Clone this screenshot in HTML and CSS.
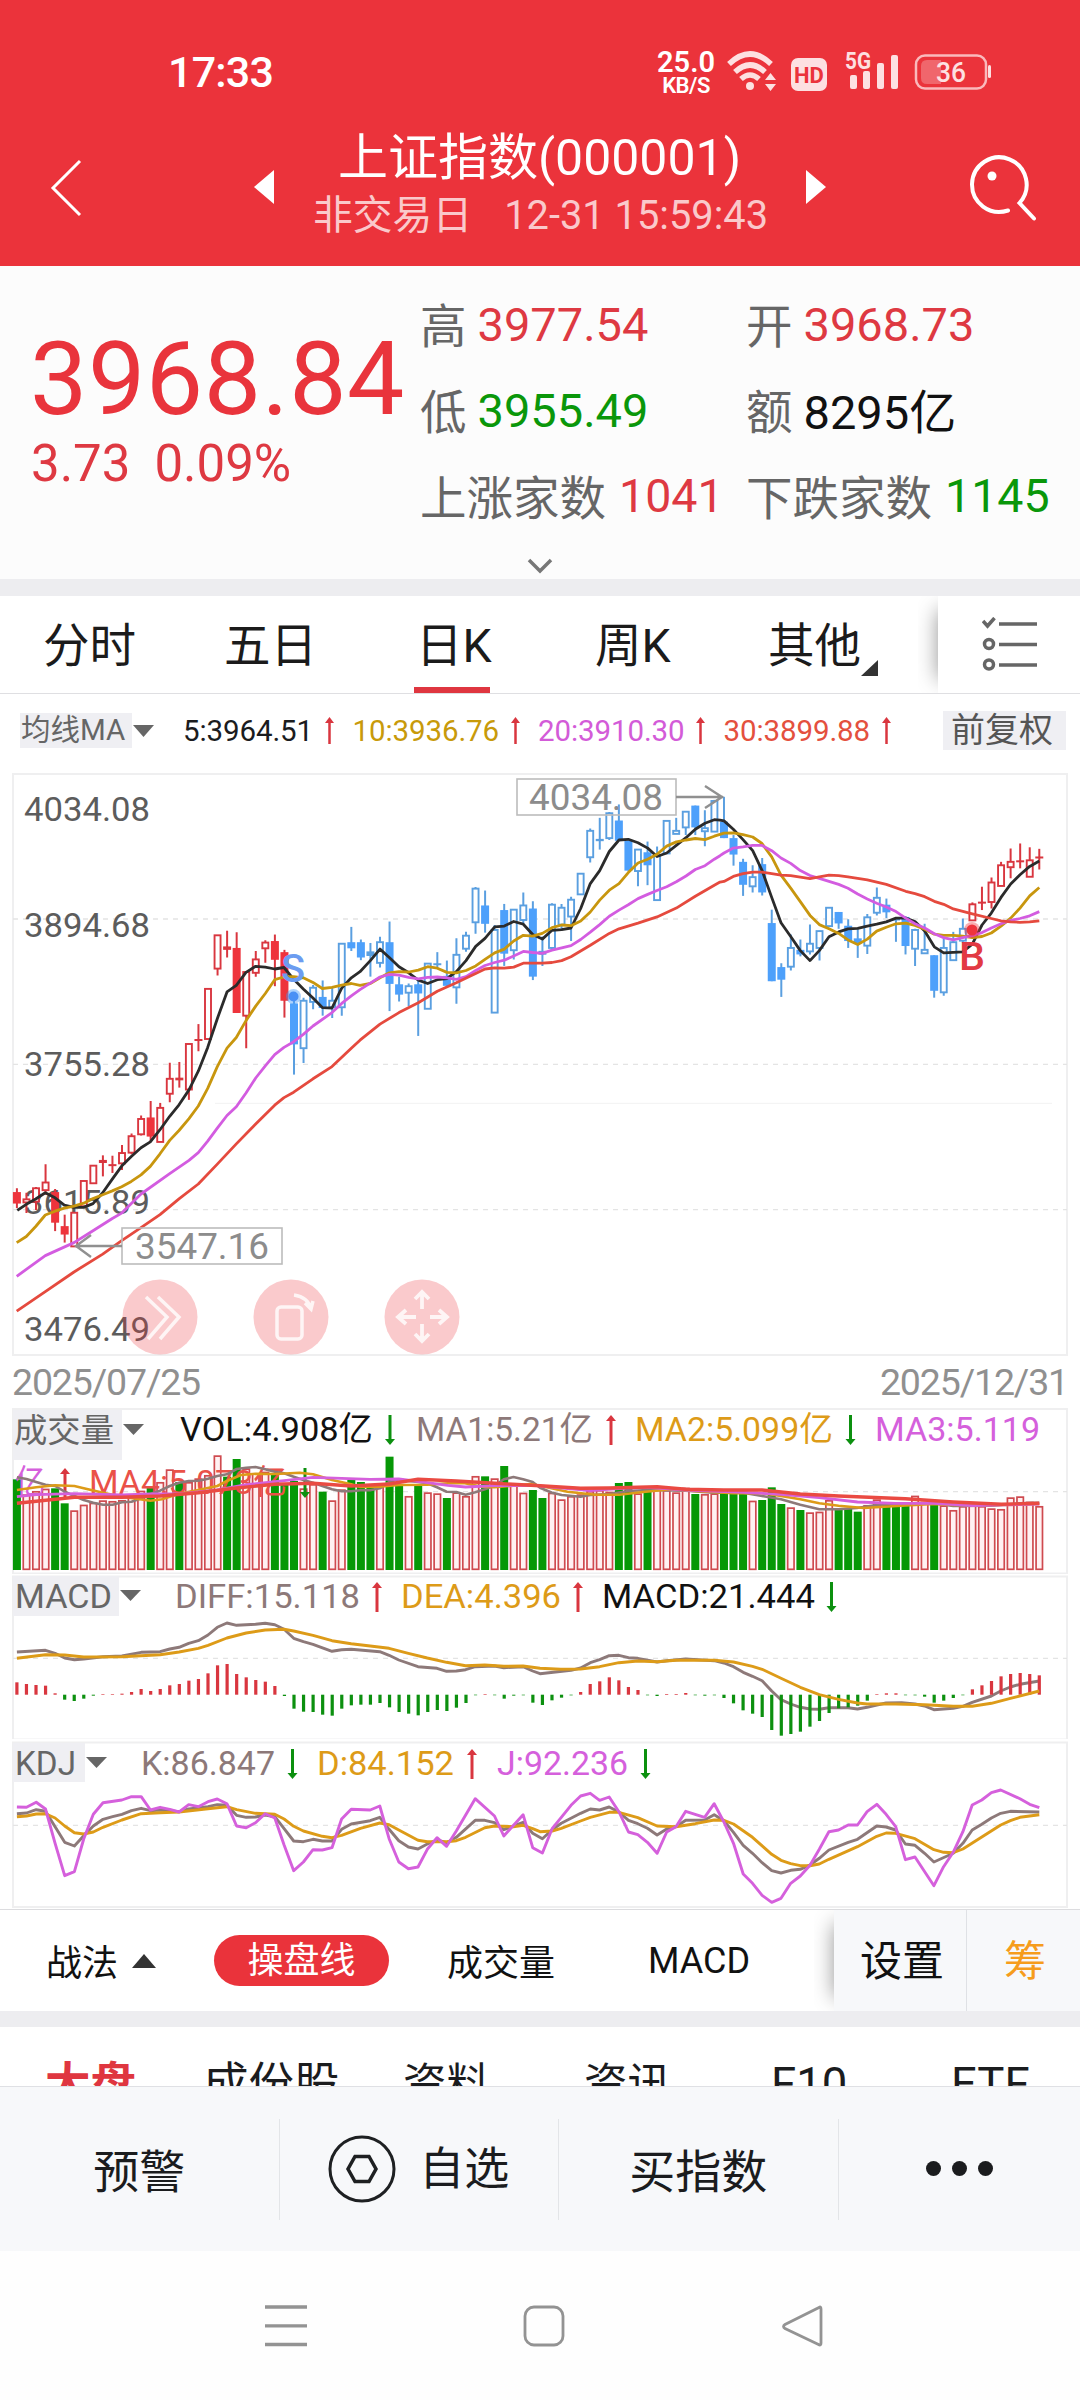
FILE: index.html
```html
<!DOCTYPE html>
<html lang="zh-CN">
<head>
<meta charset="utf-8">
<title>上证指数</title>
<link rel="stylesheet" href="styles.css">
</head>
<body>
<header class="top">
  <div class="status">
    <span class="clock">17:33</span>
    <div class="speed"><b>25.0</b><small>KB/S</small></div>
    <svg class="sysicons" width="270" height="50" viewBox="725 46 270 50">
      <g fill="none" stroke="#fde0e1" stroke-width="5.5">
        <path d="M729 64Q750 44 771 64"/><path d="M735 72Q750 58 765 72"/><path d="M741 79Q750 71 759 79"/>
      </g>
      <g fill="#fde0e1">
        <circle cx="750" cy="86" r="4"/>
        <path d="M765 80l5.5-7 5.5 7zM765 84l5.500 7 5.500-7z"/>
        <rect x="791" y="58" width="36" height="33" rx="7"/>
        <rect x="850" y="75" width="7" height="14" rx="2"/><rect x="863" y="71" width="7" height="18" rx="2"/><rect x="877" y="63" width="7" height="26" rx="2"/><rect x="891" y="55" width="7" height="34" rx="2"/>
        <rect x="988" y="65" width="3" height="13" rx="1.500"/>
      </g>
      <text x="809" y="82.500" class="hd">HD</text>
      <text x="845" y="69" class="g5" textLength="26" lengthAdjust="spacingAndGlyphs">5G</text>
      <rect x="916" y="55.500" width="70" height="33" rx="9" fill="none" stroke="#fab9bc" stroke-width="2.500"/>
      <path d="M941 60h-14q-6 0-6 6v12q0 6 6 6h14z" fill="#f0666c"/>
      <text x="936" y="82" class="bat" textLength="30" lengthAdjust="spacingAndGlyphs">36</text>
    </svg>
  </div>
  <div class="titlebar">
    <svg class="back" width="32" height="58" viewBox="0 0 32 58"><path d="M30 2L3 29L30 56" fill="none" stroke="#fff" stroke-width="3"/></svg>
    <svg class="prev" width="20" height="34" viewBox="0 0 20 34"><path d="M20 0v34L0 17z" fill="#fff"/></svg>
    <div class="titles">
      <h1>上证指数<span>(000001)</span></h1>
      <p>非交易日<span>12-31 15:59:43</span></p>
    </div>
    <svg class="next" width="20" height="34" viewBox="0 0 20 34"><path d="M0 0v34L20 17z" fill="#fff"/></svg>
    <svg class="search" width="70" height="70" viewBox="968 154 70 70"><g fill="none" stroke="#fff" stroke-width="4" stroke-linecap="round"><path d="M1008 210.500A27.300 27.300 0 1 1 1019.500 203L1034 218.500"/></g><circle cx="992" cy="176" r="4.500" fill="#fff"/></svg>
  </div>
</header>

<section class="quote">
  <div class="price">
    <div class="last">3968.84</div>
    <div class="chg"><span>3.73</span><span>0.09%</span></div>
  </div>
  <div class="stats">
    <div><label>高</label><span class="up">3977.54</span></div><div><label>开</label><span class="up">3968.73</span></div>
    <div><label>低</label><span class="dn">3955.49</span></div><div><label>额</label><span class="blk">8295亿</span></div>
    <div><label>上涨家数</label><span class="up wide">1041</span></div><div><label>下跌家数</label><span class="dn wide">1145</span></div>
  </div>
  <svg class="more" width="26" height="16" viewBox="0 0 26 16"><path d="M2 2L13 13L24 2" fill="none" stroke="#777" stroke-width="3.500"/></svg>
</section>

<nav class="periods">
  <span class="t1">分时</span><span class="t2">五日</span><span class="t3 on">日K</span><span class="t4">周K</span><span class="t5">其他</span>
  <svg class="corner" width="17" height="16" viewBox="0 0 17 16"><path d="M17 0v16H0z" fill="#333"/></svg>
  <div class="listbtn">
    <svg width="56" height="56" viewBox="983 617 56 56"><g fill="none" stroke="#666" stroke-width="3.500"><path d="M1000 624h38M1000 644.500h38M1000 665h38"/><path d="M984 621l4.500 5 7-8"/><circle cx="990" cy="644" r="4.500"/><circle cx="990" cy="664.500" r="4.500"/></g></svg>
  </div>
</nav>

<div class="legend">
  <span class="tag">均线MA</span><svg class="tri" width="21" height="12" viewBox="0 0 21 12"><path d="M0 0h21L10.500 12z" fill="#666"/></svg>
  <span class="m m5">5:3964.51</span><svg class="ar" width="9" height="27" viewBox="0 0 9 27"><path d="M4.500 4v23" stroke="#d9363f" stroke-width="2.500"/><path d="M0 6L4.500 0L9 6z" fill="#d9363f"/></svg>
  <span class="m m10">10:3936.76</span><svg class="ar" width="9" height="27" viewBox="0 0 9 27"><path d="M4.500 4v23" stroke="#d9363f" stroke-width="2.500"/><path d="M0 6L4.500 0L9 6z" fill="#d9363f"/></svg>
  <span class="m m20">20:3910.30</span><svg class="ar" width="9" height="27" viewBox="0 0 9 27"><path d="M4.500 4v23" stroke="#d9363f" stroke-width="2.500"/><path d="M0 6L4.500 0L9 6z" fill="#d9363f"/></svg>
  <span class="m m30">30:3899.88</span><svg class="ar" width="9" height="27" viewBox="0 0 9 27"><path d="M4.500 4v23" stroke="#d9363f" stroke-width="2.500"/><path d="M0 6L4.500 0L9 6z" fill="#d9363f"/></svg>
  <span class="adj">前复权</span>
</div>

<svg class="chart" id="kline" width="1080" height="590" viewBox="0 770 1080 590"></svg>
<div class="dates"><span>2025/07/25</span><span>2025/12/31</span></div>
<svg class="chart" id="vol" width="1080" height="168" viewBox="0 1406 1080 168"></svg>
<svg class="chart" id="macd" width="1080" height="165" viewBox="0 1574 1080 165"></svg>
<svg class="chart" id="kdj" width="1080" height="169" viewBox="0 1739 1080 169"></svg>

<nav class="strategy">
  <span class="s1">战法</span><svg class="uptri" width="24" height="14" viewBox="0 0 24 14"><path d="M0 14h24L12 0z" fill="#333"/></svg>
  <span class="pill">操盘线</span><span class="s3">成交量</span><span class="s4">MACD</span>
  <div class="tools"><span class="set">设置</span><span class="chip">筹</span></div>
</nav>

<nav class="sections">
  <span class="n1">大盘</span><span class="n2">成份股</span><span class="n3">资料</span><span class="n4">资讯</span><span class="n5">F10</span><span class="n6">ETF</span>
</nav>

<footer class="actions">
  <div><span>预警</span></div>
  <div class="fav"><svg width="68" height="68" viewBox="0 0 68 68"><g fill="none" stroke="#1e2022" stroke-width="3"><circle cx="34" cy="34" r="32"/><path d="M27 21.500h14L48 34L41 46.500H27L20 34z" stroke-width="3.500"/></g></svg><span>自选</span></div>
  <div><span>买指数</span></div>
  <div class="dots"><i></i><i></i><i></i></div>
</footer>

<div class="sysnav">
  <svg width="42" height="42" viewBox="0 0 42 42"><path d="M0 2h42M0 20.800h42M0 39.500h42" stroke="#939393" stroke-width="3.300"/></svg>
  <svg width="42" height="42" viewBox="0 0 42 42"><rect x="2" y="2" width="38" height="38" rx="9" fill="none" stroke="#939393" stroke-width="2.800"/></svg>
  <svg width="42" height="42" viewBox="0 0 42 42"><path d="M38 2.500Q40 1 40 4V38Q40 41 37.500 39.500L4 23.500Q1 21.500 4 19.500Z" fill="none" stroke="#939393" stroke-width="2.800"/></svg>
</div>
<script src="chart.js"></script>
</body>
</html>
```
FILE: styles.css
```css
* { box-sizing: border-box; }
body { margin: 0; width: 1080px; height: 2400px; overflow: hidden; background: #fff; color: #1b1c1e; font-family: Roboto, "Noto Sans CJK SC", sans-serif; }
svg { display: block; flex: none; }
span, label { white-space: nowrap; }
.top { height: 266px; background: #eb333b; color: #fff; }
.status { display: flex; height: 116px; padding-left: 168px; }
.clock { width: 486px; margin-top: 46px; font-size: 43px; line-height: 52px; font-weight: 500; letter-spacing: -.8px; }
.speed { width: 64px; display: flex; flex-direction: column; align-items: center; padding-top: 48px; }
.speed b { font-size: 29px; line-height: 28px; font-weight: 600; }
.speed small { font-size: 22px; line-height: 20px; font-weight: 600; letter-spacing: -.5px; }
.sysicons { margin: 46px 0 0 7px; }
.hd { font: 700 22px Roboto; fill: #eb333b; text-anchor: middle; }
.g5 { font: 700 23px Roboto; fill: #fde0e1; }
.bat { font: 500 28px Roboto; fill: #fde0e1; }
.titlebar { display: flex; height: 150px; padding-left: 50px; }
.back { margin-top: 43px; }
.prev { margin: 54px 0 0 172px; }
.titles { width: 532px; display: flex; flex-direction: column; align-items: center; }
.titles h1 { margin: 12px 0 0; font-size: 50px; line-height: 60px; font-weight: 400; white-space: nowrap; padding-right: 1px; }
.titles p { display: flex; align-items: baseline; gap: 32px; margin: 1px 0 0; font-size: 39.800px; line-height: 54px; color: #fac9cb; padding-left: 1px; }
.next { margin-top: 54px; }
.search { margin: 38px 0 0 142px; }

.quote { display: grid; grid-template-columns: 420px 660px; grid-template-rows: 284px 29px; height: 313px; background: #fcfcfc; }
.price { padding: 58px 0 0 30px; color: #e9343c; }
.last { font-size: 102px; line-height: 110px; letter-spacing: .6px; }
.chg { display: flex; gap: 24px; font-size: 51px; line-height: 60px; margin-top: 0; color: #de3942; padding-left: 1px; }
.stats { display: grid; grid-template-columns: 326px 334px; grid-template-rows: repeat(3, 86px); padding-top: 15px; }
.stats div { display: flex; align-items: center; font-size: 46.500px; }
.stats label { color: #666; margin-top: -4px; }
.stats span { margin-left: 11px; font-size: 47px; }
.stats .blk { margin-top: -4px; }
.stats .wide { margin-left: 13px; font-size: 46.500px; }
.up { color: #de3942; } .dn { color: #0a970a; } .blk { color: #111; }
.more { grid-column: 1 / 3; margin: 8px 0 0 527px; }

.periods { display: flex; align-items: center; height: 115px; border-top: 17px solid #ededf0; border-bottom: 1px solid #dfdfe2; font-size: 46.500px; color: #1b1b1b; }
.periods span { height: 97px; line-height: 100px; }
.t1 { margin-left: 43px; width: 181px; } .t2 { width: 194px; }
.t3 { width: 76px; } .on { border-bottom: 6px solid #df3640; margin-right: 105px; margin-left: -4px; padding-left: 2px; }
.t4 { width: 173px; } .t5 { width: 93px; }
.corner { margin-top: 47px; }
.listbtn { margin-left: 60px; width: 142px; height: 97px; padding: 21px 0 0 44px; background: #fff; box-shadow: -14px 0 20px -14px rgba(0,0,0,.42); clip-path: inset(0 0 0 -20px); }

.legend { display: flex; align-items: center; height: 76px; padding: 0 14px 3px 20px; font-size: 29.500px; }
.tag { width: 112px; height: 35px; line-height: 35px; padding-left: 1px; background: #efeff3; color: #666; letter-spacing: 0; }
.tri { margin: 0 29px 0 1px; }
.m { letter-spacing: -.1px; }
.m5 { width: 142px; } .m10, .m20, .m30 { width: 158px; }
.ar { margin-right: 18.500px; }
.m10 { color: #c89a0a; } .m20 { color: #d35bd8; } .m30 { color: #e4503e; }
.adj { margin-left: auto; width: 123px; height: 39px; line-height: 38px; padding-left: 8px; background: #efeff3; color: #555; font-size: 34px; }

.dates { display: flex; justify-content: space-between; height: 46px; padding: 0 12px 0 12px; font-size: 37.500px; line-height: 44px; color: #909090; letter-spacing: -1.150px; }
.chart text { font-family: Roboto, "Noto Sans CJK SC", sans-serif; }

.strategy { display: flex; align-items: center; height: 102px; margin-top: 1px; border-top: 1px solid #dcdcdf; font-size: 36px; color: #111; }
.s1 { margin-left: 46px; width: 86px; margin-top: -2px; }
.uptri { margin-right: 58px; }
.pill { width: 175px; height: 51px; line-height: 52px; border-radius: 26px; background: #ea333b; color: #fff; text-align: center; margin-top: -1px; }
.s3 { margin-left: 58px; width: 201px; margin-top: -2px; } .s4 { width: 186px; }
.tools { display: flex; width: 246px; height: 101px; background: #f7f8fa; font-size: 42px; line-height: 104px; box-shadow: -14px 0 20px -14px rgba(0,0,0,.42); clip-path: inset(0 0 0 -20px); }
.set { width: 133px; padding-left: 26px; border-right: 1px solid #dfe1e5; }
.chip { flex: 1; padding-left: 37px; color: #f69c1c; }

.sections { display: flex; height: 75px; border-top: 16px solid #ededf0; overflow: hidden; font-size: 45.500px; line-height: 116px; }
.n1 { margin-left: 45px; width: 158px; color: #df3640; font-weight: 700; } .n2 { width: 200px; } .n3 { width: 181px; font-size: 43.500px; } .n4 { width: 187px; font-size: 43.500px; } .n5 { width: 180px; }

.actions { display: grid; grid-template-columns: repeat(3, 279.500px) 1fr; align-items: center; height: 165px; background: #f7f8fa; border-top: 1px solid #dfe0e4; font-size: 46px; }
.actions > div { display: flex; align-items: center; justify-content: center; height: 101px; border-right: 1px solid #e3e5e8; }
.actions > div:last-child { border: 0; }
.actions span { margin-top: -3px; }
.actions .fav { gap: 23px; font-size: 45px; padding-bottom: 1px; }
.actions .fav span { margin-top: -7px; }
.actions .dots { gap: 11px; padding-bottom: 2px; } .dots i { width: 15px; height: 15px; border-radius: 50%; background: #1b1c1e; }
.sysnav { display: flex; gap: 216px; padding: 54px 0 0 265px; height: 149px; background: #fefefe; }
```
FILE: chart.js
```js
const NS = 'http://www.w3.org/2000/svg';
const STEP = 9.555, X0 = 16.9;
const UP = '#d9363f', DOWN = '#0c900f', GRAY = '#8d7979', ORANGE = '#dd9b18', PINK = '#d560dc', RED = '#ea4a42';

function add(parent, tag, attrs, text) {
  const el = document.createElementNS(NS, tag);
  for (const k in attrs) el.setAttribute(k, attrs[k]);
  if (text) el.textContent = text;
  parent.appendChild(el);
  return el;
}
const label = (p, x, y, size, color, text, len) =>
  add(p, 'text', Object.assign({ x, y, 'font-size': size, fill: color }, len ? { textLength: len, lengthAdjust: 'spacingAndGlyphs' } : {}), text);
const box = (p, x, y, width, height, fill, more) => add(p, 'rect', Object.assign({ x, y, width, height, fill }, more));
const path = (p, d, stroke, w, more) => add(p, 'path', Object.assign({ d, stroke, 'stroke-width': w, fill: 'none' }, more));

// Series are stored as "x,y" pairs on a tile grid; "|" moves to the next tile.
function series(p, str, tile, sx, sy, oy, color, w) {
  const pts = [];
  str.split('|').forEach((part, k) => part.trim().split(/\s+/).forEach(s => {
    const [x, y] = s.split(',').map(Number);
    pts.push((x / sx + k * tile).toFixed(1) + ',' + (y / sy + oy).toFixed(1));
  }));
  add(p, 'polyline', { points: pts.join(' '), fill: 'none', stroke: color, 'stroke-width': w, 'stroke-linejoin': 'round' });
}
function frame(p, y1, y2, grids) {
  box(p, 13, y1, 1054, y2 - y1, 'none', { stroke: '#efeff0', 'stroke-width': 2 });
  grids.forEach(y => path(p, `M13 ${y}H1067`, '#e4e4e4', 1.3, { 'stroke-dasharray': '5 5' }));
}
function arrow(p, x, y, up) {
  const c = up ? UP : DOWN;
  path(p, up ? `M${x} ${y + 4}v26` : `M${x} ${y}v26`, c, 3);
  add(p, 'path', { d: up ? `M${x - 5} ${y + 6}l5-6 5 6z` : `M${x - 5} ${y + 24}l5 6 5-6z`, fill: c });
}
function title(p, text, y1, h, w, x, base, len) {
  box(p, 13, y1, w, h, '#efeff3');
  label(p, x, base, 33, '#666', text, len);
  add(p, 'path', { d: `M${14 + w} ${base - 18}h21l-10.5 11z`, fill: '#666' });
}

/* Candles: type (h hollow, f filled, c cross), high, body top, body bottom, low */
const candles = `f1093,1103,1133,1145 h1105,1122,1130,1158 h1090,1093,1128,1150 h1030,1078,1098,1110 f1095,1103,1183,1205 f1162,1192,1214,1235 h1155,1157,1245,1245 h1073,1074,1140,1140
h1034,1034,1080,1080 c1007,1019,1027,1062 c1008,1030,1034,1053 h980,1001,1028,1045 h950,957,1000,1004 h903,912,952,955 f865,908,958,970 h870,883,972,972 h765,807,846,868 c763,804,811,830
h716,716,835,862 c664,703,708,735 h572,572,703,703 h432,432,519,537 c420,461,470,490 f424,465,635,635 h525,528,642,727 h473,495,530,540 h445,451,466,504 f430,447,496,565 f470,476,603,647
f600,610,717,796 h595,603,727,766 h562,569,606,625 f550,593,622,642 h567,603,620,648 h452,454,620,642 f410,450,466,473 f443,450,490,497 c452,474,486,540 h436,450,504,516 f396,450,559,630
f540,560,587,605 h558,565,582,617 f545,560,584,695 h505,506,624,624 c476,505,509,520 f498,538,564,568 h440,483,568,611 h423,433,467,475 h306,310,398,428 f315,354,402,425 h405,418,634,634
f350,366,480,512 h363,365,471,495 h320,354,392,402 f343,362,540,549 h435,475,480,512 h348,352,465,468 h350,360,404,415 h331,339,383,447 h270,271,325,325 h153,159,228,242 c125,180,186,208
h110,113,178,183 f90,132,185,185 f180,185,263,263 h207,208,264,304 f187,215,249,301 h200,224,340,340 h133,133,218,218 h125,159,167,167 h107,109,150,170 f93,93,150,170 h105,152,160,199 h78,81,161,161
f70,135,178,178 f170,178,221,250 f232,240,300,329 h249,280,304,320 f230,246,320,328 f365,400,552,552 f505,515,548,593 h430,465,514,524 f443,470,482,487 h404,454,474,482 h420,421,465,498
h358,360,408,408 f371,371,401,415 f390,407,447,465 f416,440,454,491 h376,385,459,481 h307,334,373,380 f336,352,372,387 c385,388,392,449 f382,384,460,482 h415,418,467,512 h402,470,479,480
f484,484,577,595 h440,465,581,590 h423,450,497,497 h388,415,446,452 h346,351,393,393 c305,344,348,366 h281,294,345,362 h240,249,303,303 h205,240,254,283 c192,236,240,257 h202,236,279,279 c206,226,230,260`.split(/\s+/);

const k = document.getElementById('kline');
const KY = 2.6133;
frame(k, 774, 1355, [919, 1064.3, 1209.7]);
path(k, 'M215 1103.300H1052', '#f2f2f2', 1);
[[821, '4034.08'], [937, '3894.68'], [1075.500, '3755.28'], [1213.500, '3615.89'], [1340.500, '3476.49']].forEach(([y, t]) => label(k, 24, y, 34, '#5c5c5c', t, 126));
candles.forEach((s, i) => {
  const t = s[0], x = X0 + STEP * i;
  const [hi, top, bot, lo] = s.slice(1).split(',').map(v => 770 + v / KY);
  const red = i < 29 || i > 99;
  const line = red ? UP : '#5a9fe0', fill = red ? '#ee343c' : '#4da0fb';
  if (t === 'h') {
    path(k, `M${x} ${hi}V${top}M${x} ${bot}V${lo}`, line, 2);
    box(k, x - 3, top, 6, Math.max(bot - top, 2), '#fff', { stroke: line, 'stroke-width': 1.9 });
  } else {
    path(k, `M${x} ${hi}V${lo}`, line, 2);
    box(k, x - 4, top, 8, Math.max(bot - top, 2), t === 'c' ? line : fill);
  }
});
const ma30 = '50,1414 136,1363 222,1312 308,1265 365,1230 423,1196 480,1162 538,1120 595,1082 652,1030 709,977 767,925 824,876 852,856 881,842 939,807 996,775 1054,727|0,706 60,664 117,634 175,608 232,578 289,556 347,532 375,520 404,517 433,518 461,515 490,505 547,505 576,503 605,498 633,488 691,458 748,427 777,415 834,400 891,384 949,361 1006,330 1063,301|0,293 12,291 40,278 69,271 98,267 126,267 155,271 183,275 212,276 241,280 270,284 298,279 327,275 356,276 384,279 413,283 442,287 499,299 557,317 585,323 614,331 643,343 671,351 700,363 757,376 814,388 843,394 872,397 900,398 929,397 958,394';
const ma20 = '50,1323 136,1269 222,1235 279,1204 337,1172 365,1158 423,1108 509,1055 567,1020 595,1000 623,970 652,936 681,903 709,880 738,844 767,805 796,773 824,744 852,725 881,710 910,691 939,669 996,634 1025,610 1054,590|0,574 31,557 60,541 88,534 117,536 146,542 175,546 203,542 232,541 261,543 289,547 318,540 347,524 375,511 404,503 433,497 461,486 490,474 518,477 547,479 576,471 605,465 633,459 662,443 691,424 719,404 748,382 777,366 805,352 834,336 863,325 891,315 920,305 949,292 978,277 1006,260 1035,250 1063,233|0,224 12,217 40,204 69,201 98,197 126,197 155,211 183,230 212,244 241,263 270,276 298,283 327,291 356,299 384,309 413,324 442,337 470,348 499,358 528,370 557,387 585,402 614,413 643,428 671,438 700,444 728,438 757,433 786,425 814,413 843,402 872,393 900,388 929,381 958,370';
const ma10 = '50,1235 79,1219 107,1193 136,1163 165,1153 193,1145 222,1140 251,1132 279,1120 308,1110 337,1100 365,1089 394,1075 423,1058 451,1036 480,1003 509,968 537,942 567,911 595,878 623,832 652,775 681,727 709,699 738,655 767,617 796,584 824,548 852,541 881,540 910,543 939,555 967,571 996,568 1025,562 1054,558|0,563 31,558 60,543 88,530 117,527 146,528 175,523 203,514 232,518 261,529 289,530 318,524 347,512 375,495 404,478 433,468 461,447 490,432 518,434 547,427 576,412 605,405 633,407 662,395 691,371 719,340 748,314 777,297 805,268 834,243 863,233 891,220 920,199 949,188 978,183 1006,179 1035,182 1063,173|0,168 12,165 40,164 69,169 98,175 126,192 155,227 183,275 212,309 241,344 270,380 298,404 327,415 356,427 384,444 413,456 442,442 470,421 499,411 528,402 557,400 585,406 614,416 643,429 671,432 700,432 728,434 757,438 786,435 814,426 843,408 872,387 900,361 929,329 958,307';
const ma5 = '52,1151 79,1135 107,1121 136,1105 165,1118 193,1137 222,1143 251,1143 279,1133 308,1105 337,1069 365,1035 394,1010 423,987 451,972 480,940 509,905 537,875 567,836 595,787 623,725 652,650 681,580 709,563 738,529 767,513 796,515 824,520 852,516 881,547 910,572 939,596 967,621 996,622 1025,570 1054,543|0,527 31,498 60,468 88,490 117,514 146,530 175,549 203,558 232,548 261,545 289,527 318,498 347,461 375,440 404,410 433,408 461,396 490,403 518,430 547,442 576,419 605,417 633,413 662,362 691,297 719,263 748,213 777,183 805,181 834,190 863,204 891,226 920,217 949,197 978,177 1006,155 1035,139 1063,130|0,131 12,133 40,155 69,182 98,211 126,262 155,333 183,399 212,435 241,472 270,498 298,472 327,436 356,423 384,415 413,414 442,408 470,403 499,397 528,387 557,387 585,396 614,421 643,462 671,478 728,475 757,455 786,405 814,374 843,333 872,298 900,274 929,252 958,238';
series(k, ma5, 360, 3, KY, 770, '#2b2b2b', 2.8);
series(k, ma10, 360, 3, KY, 770, '#c8960e', 2.8);
series(k, ma20, 360, 3, KY, 770, '#d35ce0', 2.8);
series(k, ma30, 360, 3, KY, 770, '#e54a3e', 2.8);
label(k, 281, 982, 38, '#6c9cf0', 'S', 24).setAttribute('font-weight', 500);
box(k, 286, 989, 15, 15, '#4a9cf8', { rx: 8, opacity: .45 });
add(k, 'circle', { cx: 293.5, cy: 996.500, r: 5, fill: '#4a90f5' });
add(k, 'circle', { cx: 972, cy: 930, r: 8, fill: '#ef343c', opacity: .4 });
add(k, 'circle', { cx: 972, cy: 930, r: 5.500, fill: '#ef343c' });
label(k, 959, 970, 39, '#e23a43', 'B', 26).setAttribute('font-weight', 500);
box(k, 517, 779, 159, 36, 'none', { stroke: '#bcbcbc', 'stroke-width': 1.600 });
label(k, 529, 810, 36.5, '#8c8c8c', '4034.08', 134);
path(k, 'M676 797H723M705 786L722 797L705 808', '#909090', 2.4);
box(k, 122, 1228, 160, 36, 'none', { stroke: '#bcbcbc', 'stroke-width': 1.600 });
label(k, 135, 1259, 36.5, '#8c8c8c', '3547.16', 134);
path(k, 'M122 1246H76M91 1235L76 1246L91 1257', '#909090', 2.4);
[160, 291, 422].forEach(cx => add(k, 'circle', { cx, cy: 1317, r: 37.500, fill: '#ea333b', opacity: .26 }));
path(k, 'M146 1297L167 1317L148 1339M158 1297L179 1317L160 1339', '#fff', 3.5, { opacity: .8 });
box(k, 277, 1307, 25, 32, 'none', { rx: 4, stroke: '#fff', 'stroke-width': 3.5, opacity: .8 });
path(k, 'M294 1295Q308 1297 311 1309M305 1303L311 1309L313 1301', '#fff', 3.5, { opacity: .8 });
path(k, 'M422 1309v-17m-7 7l7-7 7 7M422 1324v17m-7-7l7 7 7-7M416 1317h-18m8-7l-8 7 8 7M430 1317h17m-8-7l8 7-8 7', '#fff', 3.8, { opacity: .8 });

/* Volume */
const vols = 'g358 r403 r393 r386 g385 g430 r451 r434 r428 r421 r423 r420 r405 r392 g382 r366 r328 g366 r366 r355 r345 r286 g350 g297 r325 r340 r335 g342 g372 g363 r385 r372 g395 r421 r388 g360 g366 g380 r380 g290 g372 r408 g374 r397 r400 g414 r397 r408 r348 g349 r355 g318 r375 r398 g390 g414 r398 r418 r408 r403 r393 r390 r395 g369 g366 r400 g390 r387 r390 r397 r383 g402 r402 r400 g397 g398 g398 r422 g420 g382 g432 r442 g450 r457 r455 r420 g445 g444 g455 r435 r418 g430 g436 g436 r407 r425 g434 r436 r450 r438 r436 r438 r445 r447 r412 r409 r425 r438'.split(' ');
const v = document.getElementById('vol');
frame(v, 1409, 1573.500, [1491.700]);
vols.forEach((s, i) => {
  const x = X0 + STEP * i, top = 1360 + s.slice(1) / 3;
  if (s[0] === 'g') box(v, x - 4, top, 8, 1570 - top, '#069806');
  else box(v, x - 3.200, top + .8, 6.400, 1568.500 - top, '#fff1f2', { stroke: '#cf4a4f', 'stroke-width': 1.700 });
});
title(v, '成交量', 1410, 50, 109, 14, 1442, 100);
label(v, 180, 1440.5, 34, '#111', 'VOL:4.908亿', 193);
arrow(v, 390, 1415, false);
label(v, 416, 1440.5, 34, GRAY, 'MA1:5.21亿', 177);
arrow(v, 611, 1415, true);
label(v, 635, 1440.5, 34, ORANGE, 'MA2:5.099亿', 198);
arrow(v, 850.5, 1415, false);
label(v, 875, 1440.5, 34, PINK, 'MA3:5.119', 165);
label(v, 15, 1494, 34, PINK, '亿', 30);
arrow(v, 65, 1468, true);
label(v, 89, 1494, 34, '#ea5148', 'MA4:5.073亿', 198);
arrow(v, 305, 1468, false);
const S = 2.904;
series(v, '49,352 77,357 105,366 132,374 160,378 188,395 216,408 243,420 271,428 299,434 327,434 354,427 382,425 410,415 437,402 465,392 493,378 520,368 548,363 576,362 604,356 631,348 659,343 687,327 715,323 742,321 770,328 798,335 825,340 853,350 881,360 909,368 936,378 964,388 992,394 1020,394 1047,391 1075,391 1103,385 1130,366 1158,358 1186,363 1214,366 1241,370 1269,382 1297,395 1325,396 1352,404 1380,397 1408,388 1436,377 1463,358 1491,351 1519,358 1547,366|0,383 35,398 63,405 118,410 146,405 201,402 257,393 312,390 423,392 506,398 590,398 645,408 700,418 756,434 811,448 867,448 920,444 978,435 1030,432 1144,430 1200,438 1310,437 1394,430 1450,428', 540, S, 3, 1360, GRAY, 2.6);
series(v, '49,390 105,382 160,376 216,378 243,385 299,398 354,410 437,422 470,418 520,401 576,390 631,378 659,363 700,345 742,341 800,342 870,338 909,343 964,360 1020,373 1047,381 1100,380 1158,375 1241,374 1300,370 1350,370 1400,380 1436,382 1491,377 1540,372|0,377 80,395 160,404 230,404 300,396 380,388 450,393 560,400 645,400 700,408 756,418 811,430 867,437 940,444 1000,440 1075,436 1144,432 1200,435 1310,436 1450,432', 540, S, 3, 1360, ORANGE, 2.6);
series(v, '49,410 105,404 216,401 354,405 437,402 520,402 631,390 715,374 825,362 909,352 992,355 1075,358 1158,357 1241,368 1300,376 1352,381 1436,377 1568,376|0,378 146,392 230,386 312,382 423,390 590,397 700,403 811,413 922,426 1033,430 1144,430 1255,437 1450,432', 540, S, 3, 1360, PINK, 2.8);
series(v, '49,430 105,424 216,412 354,412 465,408 576,398 687,384 798,373 909,370 1020,378 1130,372 1214,358 1325,363 1436,370|0,377 118,385 200,384 340,380 423,388 534,390 645,390 756,402 867,408 1061,416 1200,426 1340,433 1450,430', 540, S, 3, 1360, RED, 3.4);

/* MACD */
const hist = [337,342,345,347,370,389,393,386,377,373,373,371,366,357,363,357,346,342,332,327,310,286,282,312,322,330,335,348,378,416,425,426,434,437,416,406,404,404,399,412,426,431,436,426,420,423,413,399,374,373,374,386,377,375,398,405,391,383,376,366,342,334,322,331,351,360,375,378,372,372,369,374,377,375,384,400,421,431,441,480,497,492,485,470,453,429,415,412,407,392,373,370,370,374,376,380,398,392,384,374,358,346,333,319,312,309,312,316];
const m = document.getElementById('macd');
frame(m, 1576.500, 1739.500, [1658.300]);
title(m, 'MACD', 1576, 40, 106, 15, 1608, 97);
label(m, 175, 1608, 34, GRAY, 'DIFF:15.118', 185);
arrow(m, 377, 1582, true);
label(m, 401, 1608, 34, ORANGE, 'DEA:4.396', 160);
arrow(m, 578, 1582, true);
label(m, 602, 1608, 34, '#111', 'MACD:21.444', 213);
arrow(m, 831.5, 1582, false);
series(m, '49,246 132,241 160,250 188,264 216,269 243,267 299,260 354,258 410,247 465,245 493,237 520,232 548,220 576,212 604,195 631,172 659,159 687,166 742,163 770,160 798,164 825,178 853,205 881,215 909,223 964,244 992,239 1020,238 1103,245 1130,256 1158,270 1214,290 1269,295 1297,304 1325,303 1352,299 1380,290 1436,288 1463,293 1519,290 1547,303|0,311 90,301 118,294 146,278 173,269 201,257 229,256 257,263 284,265 340,276 368,272 423,267 506,272 534,279 562,290 590,307 617,319 645,332 673,363 700,389 728,402 756,412 784,417 811,418 839,413 895,413 922,417 950,412 978,405 1005,399 1050,398 1089,402 1117,408 1144,419 1200,415 1228,409 1255,397 1311,378 1338,363 1366,351 1394,343 1450,333', 540, S, 3, 1570, GRAY, 2.9);
hist.forEach((h, i) => {
  const x = X0 + STEP * i, y = 1570 + h / 3, z = 1694.7;
  box(m, x - 1.6, Math.min(y, z), 3.2, Math.max(Math.abs(y - z), .6), h <= 373 ? UP : DOWN);
});
series(m, '49,265 132,254 188,255 243,261 354,260 465,254 520,246 576,235 604,226 659,204 715,189 770,180 825,178 853,183 909,196 964,212 1020,221 1075,228 1130,235 1186,250 1241,264 1297,277 1352,287 1408,285 1463,289 1519,288|0,295 60,298 118,297 173,290 229,278 284,273 340,275 395,271 506,271 562,276 617,289 645,298 700,325 756,352 811,374 867,388 922,399 950,402 1033,402 1117,404 1200,409 1255,409 1311,400 1366,385 1450,363', 540, S, 3, 1570, ORANGE, 2.9);

/* KDJ */
const j = document.getElementById('kdj');
frame(j, 1742.500, 1907, [1825.300]);
title(j, 'KDJ', 1743, 39, 72, 15, 1775, 61);
label(j, 141, 1775, 34, GRAY, 'K:86.847', 134);
arrow(j, 292.5, 1749, false);
label(j, 317, 1775, 34, ORANGE, 'D:84.152', 137);
arrow(j, 472, 1749, true);
label(j, 497, 1775, 34, PINK, 'J:92.236', 131);
arrow(j, 645.5, 1749, false);
series(j, '49,731 77,729 105,719 132,724 160,770 188,817 216,828 243,797 271,768 299,748 327,740 354,733 382,722 410,715 437,722 465,720 520,725 548,717 604,710 631,704 659,706 687,736 715,742 742,741 770,735 798,740 825,776 853,813 881,815 909,808 936,813 964,813 992,778 1020,762 1075,752 1103,742 1130,778 1158,812 1186,831 1214,837 1241,822 1269,810 1297,818 1325,802 1380,751 1408,751 1436,758 1463,779 1519,757 1547,790|7,806 35,779 62,760 118,730 146,717 173,720 201,711 229,726 257,751 284,761 312,775 340,795 368,777 395,770 423,751 478,750 506,734 534,752 562,787 590,826 617,850 645,878 673,902 700,909 728,901 756,898 784,885 811,865 839,840 895,817 922,808 978,768 1005,771 1033,780 1061,822 1089,826 1117,850 1144,876 1200,850 1228,820 1255,780 1283,763 1311,744 1338,730 1366,724 1450,726', 540, S, 3, 1570, GRAY, 2.9);
series(j, '49,740 77,738 105,732 132,731 160,744 188,768 216,788 243,792 271,786 299,772 354,750 410,731 465,728 520,726 604,716 659,710 687,719 742,730 798,733 825,747 853,769 881,783 936,799 964,803 992,796 1047,775 1103,759 1130,764 1158,780 1214,811 1241,815 1297,815 1325,812 1352,802 1408,773 1436,768 1491,770 1519,766 1547,776|0,785 35,783 62,775 118,753 146,742 201,727 229,727 284,743 340,768 395,770 451,761 506,750 534,751 562,762 617,802 673,853 700,871 728,881 756,887 784,887 811,882 839,868 922,830 978,799 1005,789 1033,790 1089,806 1144,839 1172,847 1200,848 1228,837 1283,801 1338,765 1366,752 1394,742 1450,734', 540, S, 3, 1570, ORANGE, 2.9);
series(j, '49,711 77,712 105,697 132,717 160,820 188,917 216,905 243,807 271,733 299,698 354,690 382,680 410,680 437,720 465,712 493,718 520,726 548,704 576,710 604,695 631,687 659,701 687,768 715,773 742,758 770,731 798,744 825,825 853,902 881,876 909,839 936,840 964,833 992,747 1020,718 1075,720 1103,708 1130,806 1158,876 1186,896 1214,891 1241,838 1269,803 1297,829 1325,783 1380,686 1436,738 1463,798 1519,734 1547,833|7,849 35,776 62,742 90,706 118,678 146,670 173,691 201,681 229,725 257,786 284,794 312,817 340,850 368,786 395,770 423,724 478,742 506,701 534,756 562,820 590,912 617,940 645,976 673,997 700,985 728,940 756,918 784,886 811,838 839,785 867,780 895,765 922,765 950,725 978,703 1005,733 1033,770 1061,869 1089,861 1144,947 1172,890 1200,847 1228,785 1255,705 1283,690 1311,668 1338,660 1394,686 1422,703 1450,713', 540, S, 3, 1570, PINK, 2.9);
```
